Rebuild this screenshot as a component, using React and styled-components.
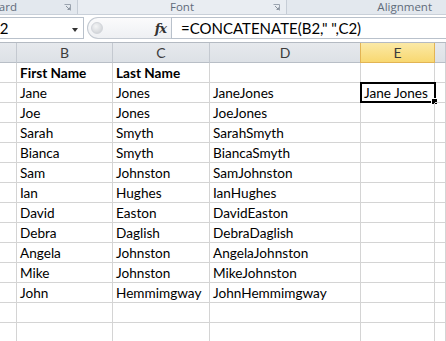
import React from "react";
import styled, { createGlobalStyle } from "styled-components";

const Global = createGlobalStyle`
  html, body { margin: 0; padding: 0; background: #ffffff; overflow: hidden; }
  body { width: 446px; height: 341px; font-family: "Lato", "Liberation Sans", sans-serif; }
`;

const Page = styled.div`
  width: 446px;
  height: 341px;
  overflow: hidden;
  display: flex;
  flex-direction: column;
  background: #ffffff;
`;

/* ---------- ribbon group labels ---------- */
const RibbonLabels = styled.div`
  display: flex;
  height: 14px;
  background: #e3e8ee;
  border-bottom: 1px solid #c9d0d9;
  flex-shrink: 0;
`;

const Group = styled.div`
  position: relative;
  width: ${(p) => p.$w}px;
  flex: ${(p) => (p.$grow ? "1" : "none")};
  display: flex;
  align-items: flex-start;
  justify-content: ${(p) => p.$justify || "center"};
  padding-right: ${(p) => p.$pr || 0}px;
  box-sizing: border-box;
  overflow: hidden;
  border-right: ${(p) => (p.$sep ? "1px solid #c6cdd6" : "none")};
  background: ${(p) => p.$bg || "transparent"};
`;

const GroupLabel = styled.span`
  font-family: "Open Sans", "Liberation Sans", sans-serif;
  font-size: 11.5px;
  line-height: 14px;
  color: #5f6b7a;
  white-space: nowrap;
`;

const Launcher = styled.svg`
  position: absolute;
  right: ${(p) => p.$r}px;
  top: 4px;
`;

/* ---------- formula bar ---------- */
const FormulaRow = styled.div`
  display: flex;
  align-items: stretch;
  height: 22px;
  margin-top: 2px;
  margin-bottom: 3px;
  flex-shrink: 0;
`;

const NameBox = styled.div`
  margin-left: -12px;
  width: 96px;
  box-sizing: border-box;
  border: 1px solid #b9c1cb;
  border-left: none;
  background: #ffffff;
  display: flex;
  align-items: center;
  padding-left: 3px;
  position: relative;
  font-size: 15px;
  color: #000;
`;

const DropArrow = styled.span`
  position: absolute;
  right: 5px;
  top: 10px;
  width: 0;
  height: 0;
  border-left: 3.5px solid transparent;
  border-right: 3.5px solid transparent;
  border-top: 4px solid #333;
`;

const Splitter = styled.div`
  margin-left: 3px;
  width: 84px;
  box-sizing: border-box;
  border: 1px solid #c3c9d1;
  border-right: none;
  border-radius: 11px 0 0 11px;
  background: linear-gradient(#fbfbfc, #eef0f3);
  display: flex;
  align-items: center;
  justify-content: space-between;
  padding: 0 5px 0 3px;
`;

const Knob = styled.span`
  width: 10px;
  height: 10px;
  border-radius: 50%;
  background: radial-gradient(circle at 40% 35%, #f4f5f6, #c9ccd1);
  border: 1px solid #d2d5da;
`;

const Fx = styled.span`
  font-family: "DejaVu Serif", "Liberation Serif", serif;
  font-style: italic;
  font-weight: bold;
  font-size: 13px;
  color: #333;
  letter-spacing: -1px;
`;

const FormulaInput = styled.div`
  flex: 1;
  box-sizing: border-box;
  border: 1px solid #b9c1cb;
  border-right: none;
  background: #ffffff;
  display: flex;
  align-items: center;
  padding-left: 9px;
  font-size: 15px;
  color: #000;
  white-space: nowrap;
`;

/* ---------- sheet grid ---------- */
const Sheet = styled.div`
  display: grid;
  grid-template-columns: 17px 96px 97px 151px 74px 1fr;
  grid-auto-rows: 20px;
  border-top: 1px solid #b4bac2;
`;

const HeaderCell = styled.div`
  box-sizing: border-box;
  border-right: 1px solid ${(p) => (p.$sel ? "#e2b454" : "#c4c9d0")};
  border-left: ${(p) => (p.$sel ? "1px solid #e2b454" : "none")};
  border-bottom: 1px solid ${(p) => (p.$sel ? "#e2b454" : "#b8bec6")};
  background: ${(p) =>
    p.$sel
      ? "linear-gradient(#fbe9a6, #f8d871)"
      : "linear-gradient(#e6e9ed, #dde1e6)"};
  display: flex;
  align-items: center;
  justify-content: center;
  font-size: 14px;
  color: #3c3c3c;
  margin-left: ${(p) => (p.$sel ? "-1px" : "0")};
`;

const Cell = styled.div`
  position: relative;
  box-sizing: border-box;
  border-right: 1px solid #d4d4d4;
  border-bottom: 1px solid #d4d4d4;
  padding: 2px 0 0 3px;
  font-size: 13.6px;
  line-height: 17px;
  font-weight: ${(p) => (p.$bold ? 700 : 400)};
  color: #000;
  white-space: nowrap;
  overflow: visible;
`;

const Selection = styled.div`
  position: absolute;
  left: -1px;
  top: -1px;
  right: -2px;
  bottom: -1px;
  border: 2px solid #000;
  pointer-events: none;
`;

const FillHandle = styled.span`
  position: absolute;
  right: -4px;
  bottom: -4px;
  width: 5px;
  height: 5px;
  background: #000;
  border: 1px solid #fff;
`;

const rows = [
  ["First Name", "Last Name", "", ""],
  ["Jane", "Jones", "JaneJones", "Jane Jones"],
  ["Joe", "Jones", "JoeJones", ""],
  ["Sarah", "Smyth", "SarahSmyth", ""],
  ["Bianca", "Smyth", "BiancaSmyth", ""],
  ["Sam", "Johnston", "SamJohnston", ""],
  ["Ian", "Hughes", "IanHughes", ""],
  ["David", "Easton", "DavidEaston", ""],
  ["Debra", "Daglish", "DebraDaglish", ""],
  ["Angela", "Johnston", "AngelaJohnston", ""],
  ["Mike", "Johnston", "MikeJohnston", ""],
  ["John", "Hemmimgway", "JohnHemmimgway", ""],
  ["", "", "", ""],
  ["", "", "", ""],
];

const LauncherIcon = ({ r }) => (
  <Launcher $r={r} width="7" height="7" viewBox="0 0 7 7">
    <path d="M0.5 0.5H6.5V6.5" fill="none" stroke="#9aa3ae" strokeWidth="1" />
    <path d="M2 2L5.5 5.5M3.5 5.5H5.5V3.5" fill="none" stroke="#8a939e" strokeWidth="1" />
  </Launcher>
);

export default function App() {
  return (
    <Page>
      <Global />
      <RibbonLabels>
        <Group $w={78} $justify="flex-end" $pr={60} $sep>
          <GroupLabel>Clipboard</GroupLabel>
          <LauncherIcon r={6} />
        </Group>
        <Group $w={209} $sep $bg="#e9edf2">
          <GroupLabel>Font</GroupLabel>
          <LauncherIcon r={6} />
        </Group>
        <Group $grow $justify="flex-end" $pr={14}>
          <GroupLabel>Alignment</GroupLabel>
        </Group>
      </RibbonLabels>

      <FormulaRow>
        <NameBox>
          E2
          <DropArrow />
        </NameBox>
        <Splitter>
          <Knob />
          <Fx>fx</Fx>
        </Splitter>
        <FormulaInput>=CONCATENATE(B2," ",C2)</FormulaInput>
      </FormulaRow>

      <Sheet>
        <HeaderCell />
        <HeaderCell>B</HeaderCell>
        <HeaderCell>C</HeaderCell>
        <HeaderCell>D</HeaderCell>
        <HeaderCell $sel>E</HeaderCell>
        <HeaderCell />
        {rows.map((r, i) => (
          <React.Fragment key={i}>
            <Cell />
            <Cell $bold={i === 0}>{r[0]}</Cell>
            <Cell $bold={i === 0}>{r[1]}</Cell>
            <Cell>{r[2]}</Cell>
            <Cell>
              {r[3]}
              {i === 1 && (
                <Selection>
                  <FillHandle />
                </Selection>
              )}
            </Cell>
            <Cell />
          </React.Fragment>
        ))}
      </Sheet>
    </Page>
  );
}
